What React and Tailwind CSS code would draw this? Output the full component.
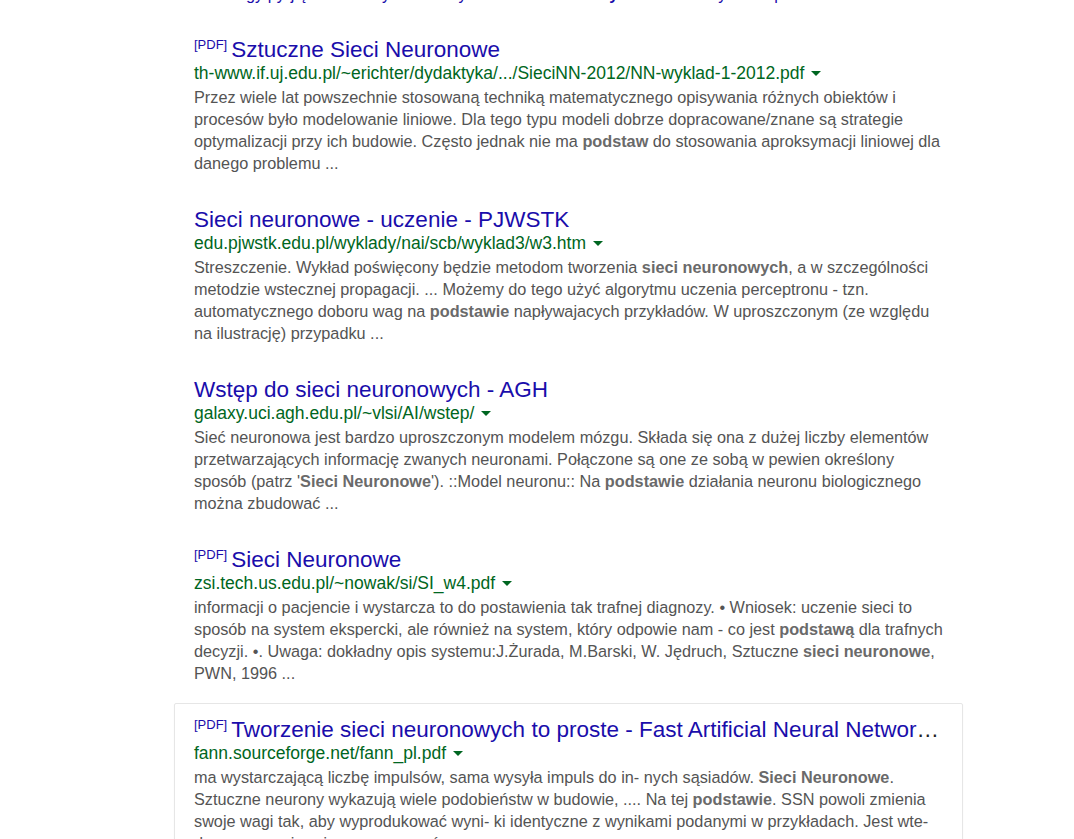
const results = [
  {
    pdf: true,
    title: 'Sztuczne Sieci Neuronowe',
    url: 'th-www.if.uj.edu.pl/~erichter/dydaktyka/.../SieciNN-2012/NN-wyklad-1-2012.pdf',
    lines: [
      ['Przez wiele lat powszechnie stosowaną techniką matematycznego opisywania różnych obiektów i'],
      ['procesów było modelowanie liniowe. Dla tego typu modeli dobrze dopracowane/znane są strategie'],
      ['optymalizacji przy ich budowie. Często jednak nie ma ', { b: 'podstaw' }, ' do stosowania aproksymacji liniowej dla'],
      ['danego problemu ...']
    ]
  },
  {
    title: 'Sieci neuronowe - uczenie - PJWSTK',
    url: 'edu.pjwstk.edu.pl/wyklady/nai/scb/wyklad3/w3.htm',
    lines: [
      ['Streszczenie. Wykład poświęcony będzie metodom tworzenia ', { b: 'sieci neuronowych' }, ', a w szczególności'],
      ['metodzie wstecznej propagacji. ... Możemy do tego użyć algorytmu uczenia perceptronu - tzn.'],
      ['automatycznego doboru wag na ', { b: 'podstawie' }, ' napływajacych przykładów. W uproszczonym (ze względu'],
      ['na ilustrację) przypadku ...']
    ]
  },
  {
    title: 'Wstęp do sieci neuronowych - AGH',
    url: 'galaxy.uci.agh.edu.pl/~vlsi/AI/wstep/',
    lines: [
      ['Sieć neuronowa jest bardzo uproszczonym modelem mózgu. Składa się ona z dużej liczby elementów'],
      ['przetwarzających informację zwanych neuronami. Połączone są one ze sobą w pewien określony'],
      ["sposób (patrz '", { b: 'Sieci Neuronowe' }, "'). ::Model neuronu:: Na ", { b: 'podstawie' }, ' działania neuronu biologicznego'],
      ['można zbudować ...']
    ]
  },
  {
    pdf: true,
    title: 'Sieci Neuronowe',
    url: 'zsi.tech.us.edu.pl/~nowak/si/SI_w4.pdf',
    lines: [
      ['informacji o pacjencie i wystarcza to do postawienia tak trafnej diagnozy. • Wniosek: uczenie sieci to'],
      ['sposób na system ekspercki, ale również na system, który odpowie nam - co jest ', { b: 'podstawą' }, ' dla trafnych'],
      ['decyzji. •. Uwaga: dokładny opis systemu:J.Żurada, M.Barski, W. Jędruch, Sztuczne ', { b: 'sieci neuronowe' }, ','],
      ['PWN, 1996 ...']
    ]
  },
  {
    pdf: true,
    hover: true,
    title: 'Tworzenie sieci neuronowych to proste - Fast Artificial Neural Networ',
    ellipsis: true,
    url: 'fann.sourceforge.net/fann_pl.pdf',
    lines: [
      ['ma wystarczającą liczbę impulsów, sama wysyła impuls do in- nych sąsiadów. ', { b: 'Sieci Neuronowe' }, '.'],
      ['Sztuczne neurony wykazują wiele podobieństw w budowie, .... Na tej ', { b: 'podstawie' }, '. SSN powoli zmienia'],
      ['swoje wagi tak, aby wyprodukować wyni- ki identyczne z wynikami podanymi w przykładach. Jest wte-'],
      ['dy nauczona i może rozpoznawać ...']
    ]
  }
];

function Result({ r }) {
  return (
    <div
      className={`w-[789px] rounded-[2px] border pl-[19px] pr-[19px] pt-[13px] pb-[18px] ${
        r.hover ? 'border-[#e6e6e6] shadow-[0_1px_2px_rgba(0,0,0,0.04)]' : 'border-transparent'
      }`}
    >
      <div className="flex h-[26px] items-start whitespace-nowrap leading-[26px] text-[#1a0dab]">
        {r.pdf ? <span className="mr-[4px] mt-[-1px] text-[13px] leading-[18px]">[PDF]</span> : null}
        <span className="text-[22.5px]">{r.title}</span>
        {r.ellipsis ? <span className="text-[22.5px] text-[#222]">…</span> : null}
      </div>
      <div className="flex h-[20px] items-center text-[17.5px] leading-[20px] text-[#006621]">
        <span className="whitespace-nowrap">{r.url}</span>
        <span className="ml-[7px] mt-[1px] h-0 w-0 border-x-[5px] border-t-[5px] border-x-transparent border-t-[#006621]" />
      </div>
      <div className="mt-[3px] text-[16.25px] leading-[22px] text-[#545454]">
        {r.lines.map((line, i) => (
          <div key={i} className="whitespace-nowrap">
            {line.map((part, j) =>
              typeof part === 'string' ? (
                <span key={j}>{part}</span>
              ) : (
                <b key={j} className="font-bold text-[#6a6a6a]">{part.b}</b>
              )
            )}
          </div>
        ))}
      </div>
    </div>
  );
}

export default function App() {
  return (
    <div className="min-h-[839px] overflow-hidden bg-white font-['Liberation_Sans',Arial,sans-serif]">
      <div className="pl-[174px]">
        {/* tail of the previous block, scrolled off the top */}
        <div className="ml-[20px] mt-[-17px] h-[22px] whitespace-nowrap text-[16.25px] leading-[22px] text-[#1a0dab]">
          <span className="inline-block w-[52px]" />gy py<span className="inline-block w-[6px]" />j ęcie na <span className="inline-block w-[26px]" />y <span className="inline-block w-[26px]" />zależy od
          <span className="inline-block w-[120px]" /><b>y</b><span className="inline-block w-[100px]" />y<span className="inline-block w-[48px]" />p
        </div>
        <div className="h-[18px]" />
        {results.map((r) => (
          <Result key={r.url} r={r} />
        ))}
      </div>
    </div>
  );
}
